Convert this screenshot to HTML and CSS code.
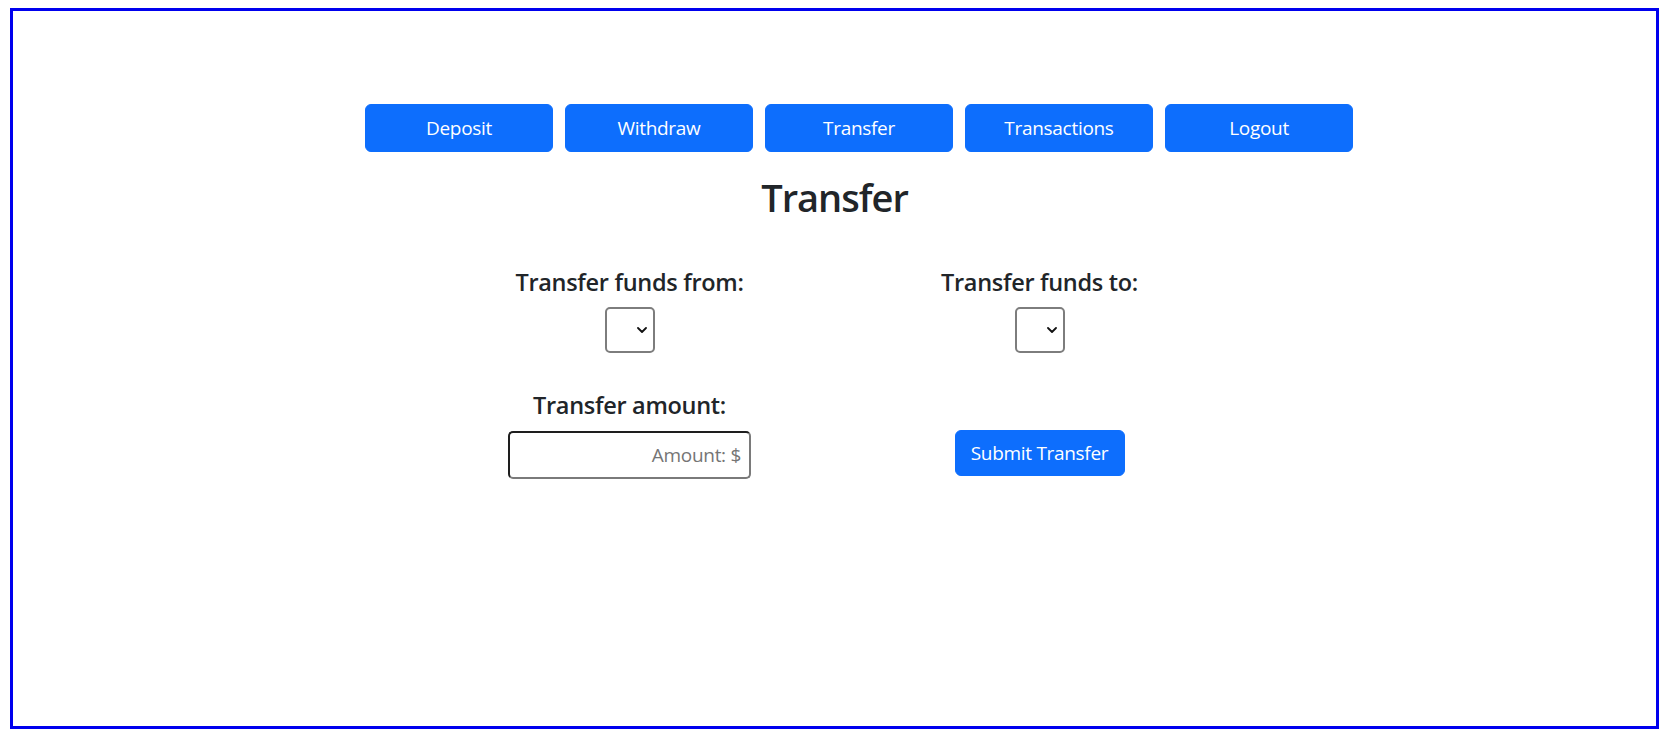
FILE: index.html
```html
<!DOCTYPE html>
<html lang="en">
<head>
<meta charset="utf-8">
<title>Transfer</title>
<link rel="stylesheet" href="styles.css">
</head>
<body>
<div class="frame">
  <nav class="nav">
    <button class="btn btn-lg nav-btn" type="button">Deposit</button>
    <button class="btn btn-lg nav-btn" type="button">Withdraw</button>
    <button class="btn btn-lg nav-btn" type="button">Transfer</button>
    <button class="btn btn-lg nav-btn" type="button">Transactions</button>
    <button class="btn btn-lg nav-btn" type="button">Logout</button>
  </nav>
  <h1 class="title">Transfer</h1>
  <form class="grid">
    <label class="field-label" for="from">Transfer funds from:</label>
    <label class="field-label" for="to">Transfer funds to:</label>
    <div class="cell">
      <span class="select-wrap">
        <select id="from" class="select"></select>
        <svg class="chevron" width="10" height="6" viewBox="0 0 10 6"><path d="M1 1l4 4 4-4" fill="none" stroke="#111" stroke-width="1.8" stroke-linecap="round" stroke-linejoin="round"/></svg>
      </span>
    </div>
    <div class="cell">
      <span class="select-wrap">
        <select id="to" class="select"></select>
        <svg class="chevron" width="10" height="6" viewBox="0 0 10 6"><path d="M1 1l4 4 4-4" fill="none" stroke="#111" stroke-width="1.8" stroke-linecap="round" stroke-linejoin="round"/></svg>
      </span>
    </div>
    <label class="field-label row2" for="amount">Transfer amount:</label>
    <div class="cell row2"></div>
    <div class="cell">
      <input id="amount" class="amount" type="text" placeholder="Amount: $">
    </div>
    <div class="cell">
      <button class="btn submit" type="button">Submit Transfer</button>
    </div>
  </form>
</div>
</body>
</html>
```
FILE: styles.css
```css
html, body {
  margin: 0;
  padding: 0;
  background: #ffffff;
}

body {
  font-family: "Open Sans", "Noto Sans", sans-serif;
  color: #212529;
}

.frame {
  margin: 8px 9px 0 10px;
  height: 721px;
  box-sizing: border-box;
  border: 3px solid #0000ee;
  padding-top: 93px;
}

.nav {
  display: flex;
  justify-content: center;
  gap: 12px;
  padding-left: 49px;
}

.btn {
  font-family: inherit;
  background: #0d6efd;
  color: #ffffff;
  border: 1px solid #0d6efd;
  border-radius: 6px;
  cursor: pointer;
  white-space: nowrap;
}

.btn-lg {
  font-size: 19px;
  line-height: 30px;
  padding: 8px 16px;
  letter-spacing: -0.3px;
}

.nav-btn {
  width: 188px;
}

.title {
  margin: 21px 0 0;
  text-align: center;
  font-size: 38px;
  line-height: 48px;
  font-weight: 600;
  letter-spacing: -1px;
}

.grid {
  display: grid;
  grid-template-columns: 410px 410px;
  justify-content: center;
  margin-top: 47px;
}

.field-label {
  display: block;
  text-align: center;
  font-size: 23.5px;
  line-height: 29px;
  font-weight: 600;
  letter-spacing: -0.3px;
  color: #212529;
}

.row2 {
  margin-top: 38px;
}

.cell {
  display: flex;
  justify-content: center;
  align-items: flex-start;
  margin-top: 10px;
}

.cell.row2 {
  margin-top: 38px;
}

.select-wrap {
  position: relative;
  display: inline-block;
  width: 50px;
  height: 46px;
}

.select {
  appearance: none;
  -webkit-appearance: none;
  width: 50px;
  height: 46px;
  box-sizing: border-box;
  border: 2px solid #7d7d7d;
  border-radius: 5px;
  background: #ffffff;
  margin: 0;
}

.chevron {
  position: absolute;
  left: 32px;
  top: 20px;
}

.amount {
  width: 243px;
  height: 48px;
  box-sizing: border-box;
  border-width: 2px;
  border-style: solid;
  border-color: #1e1e1e #7a7a7a #7a7a7a #1e1e1e;
  border-radius: 5px;
  padding: 0 8px;
  margin: 1px 0 0;
  text-align: right;
  font-family: inherit;
  font-size: 19px;
  color: #212529;
  background: #ffffff;
}

.amount::placeholder {
  color: #757575;
  letter-spacing: -0.3px;
}

.submit {
  font-size: 19px;
  line-height: 30px;
  padding: 7px 0;
  width: 170px;
  height: 46px;
  letter-spacing: -0.3px;
}
```
